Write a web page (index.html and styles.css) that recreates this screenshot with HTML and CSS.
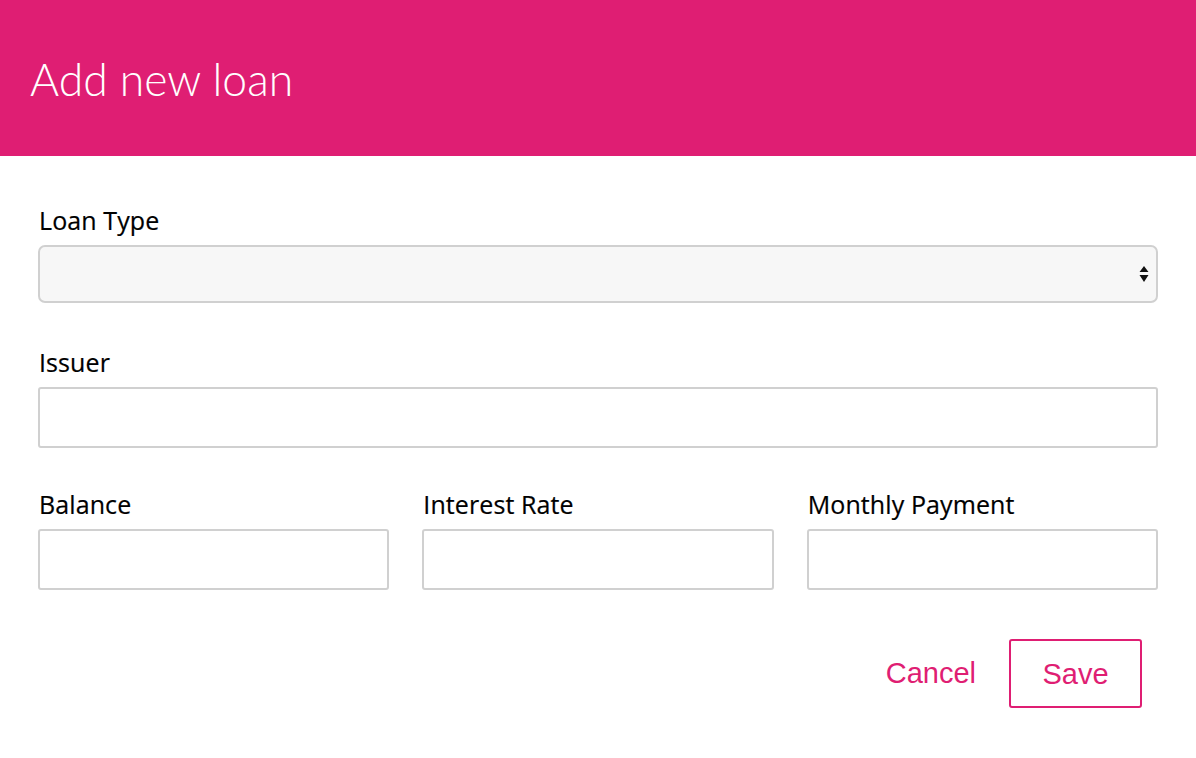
FILE: index.html
```html
<!DOCTYPE html>
<html lang="en">
<head>
<meta charset="utf-8">
<title>Add new loan</title>
<link rel="stylesheet" href="styles.css">
</head>
<body>
<header class="header">
  <h1 class="title">Add new loan</h1>
</header>
<form class="form">
  <div class="field field-select">
    <label class="label" for="type">Loan Type</label>
    <div class="select-wrap">
      <select class="select" id="type"><option></option></select>
      <svg class="select-arrow" width="10" height="17" viewBox="0 0 10 17"><path d="M5 0 L9.5 6 H0.5 Z M0.5 9 H9.5 L5 16 Z" fill="#111"/></svg>
    </div>
  </div>
  <div class="field">
    <label class="label" for="issuer">Issuer</label>
    <input class="input" id="issuer" type="text">
  </div>
  <div class="row">
    <div class="field">
      <label class="label" for="balance">Balance</label>
      <input class="input" id="balance" type="text">
    </div>
    <div class="field">
      <label class="label" for="rate">Interest Rate</label>
      <input class="input" id="rate" type="text">
    </div>
    <div class="field">
      <label class="label" for="payment">Monthly Payment</label>
      <input class="input" id="payment" type="text">
    </div>
  </div>
  <div class="actions">
    <button type="button" class="btn-link">Cancel</button>
    <button type="button" class="btn-outline">Save</button>
  </div>
</form>
</body>
</html>
```
FILE: styles.css
```css
* { box-sizing: border-box; }
html, body { margin: 0; padding: 0; background: #fff; }
body { font-family: "Open Sans", "Noto Sans", sans-serif; color: #000; }

.header {
  background: #df1e73;
  height: 156px;
  padding: 0 30px;
  display: flex;
  align-items: center;
}
.title {
  margin: 0;
  color: #fff;
  font-family: "Lato", sans-serif;
  font-weight: 300;
  font-size: 44.5px;
  line-height: 1;
  padding-top: 2px;
}

.form {
  padding: 49px 38px 0;
  display: flex;
  flex-direction: column;
  gap: 41px;
}
.field { display: flex; flex-direction: column; }
.field-select { margin-bottom: 3px; }
.label {
  font-size: 25px;
  line-height: 30px;
  margin-bottom: 10px;
  padding-left: 1px;
  letter-spacing: 0.1px;
  -webkit-text-stroke: 0.2px #000;
}
.select-wrap { position: relative; }
.select {
  -webkit-appearance: none;
  appearance: none;
  width: 100%;
  height: 58px;
  border: 2px solid #d0d0d0;
  border-radius: 7px;
  background: #f7f7f7;
  font: inherit;
  margin: 0;
  display: block;
}
.select-arrow {
  position: absolute;
  right: 9px;
  top: 21px;
}
.input {
  width: 100%;
  height: 61px;
  border: 2px solid #d0d0d0;
  border-radius: 3px;
  background: #fff;
  font: inherit;
  margin: 0;
  display: block;
}
.row {
  display: grid;
  grid-template-columns: repeat(3, 1fr);
  column-gap: 33px;
}

.actions {
  display: flex;
  justify-content: flex-end;
  align-items: center;
  gap: 33px;
  margin-top: 8px;
  padding-right: 16px;
}
.btn-link, .btn-outline {
  font-family: "Liberation Sans", Arial, sans-serif;
  font-size: 29px;
  color: #df1e73;
  background: none;
  margin: 0;
  cursor: pointer;
}
.btn-link {
  border: 0;
  padding: 0;
  margin-top: -1px;
}
.btn-outline {
  height: 69px;
  width: 133px;
  border: 2px solid #df1e73;
  border-radius: 3px;
  padding: 2px 0 0;
}
```
